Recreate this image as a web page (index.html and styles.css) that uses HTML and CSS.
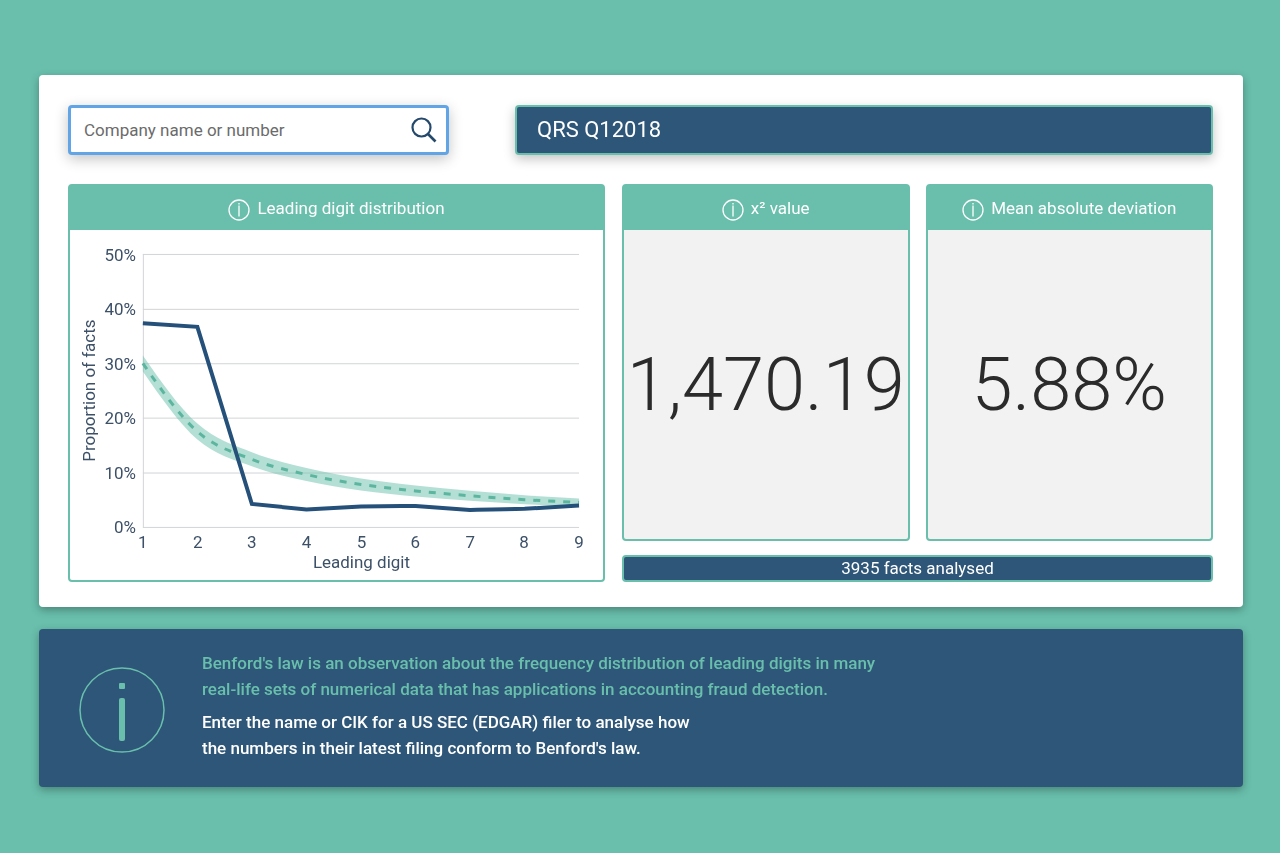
FILE: index.html
```html
<!DOCTYPE html>
<html lang="en">
<head>
<meta charset="utf-8">
<meta name="viewport" content="width=device-width, initial-scale=1">
<title>Benford's law analyser</title>
<link rel="stylesheet" href="styles.css">
</head>
<body>
<svg class="defs" width="0" height="0" aria-hidden="true">
  <symbol id="info" viewBox="0 0 22 22">
    <circle cx="11" cy="11" r="10" fill="none" stroke="currentColor" stroke-width="1.3"/>
    <path d="M11 4v1.6M11 6.6v11" fill="none" stroke="currentColor" stroke-width="1.3"/>
  </symbol>
</svg>
<main class="page">
  <section class="card">
    <div class="top">
      <form class="search" role="search">
        <input class="search-input" type="text" placeholder="Company name or number" aria-label="Company name or number" autofocus>
        <button class="search-button" type="submit" aria-label="Search">
          <svg width="26" height="26" viewBox="0 0 26 26" fill="none" stroke="currentColor" stroke-width="2.2"><circle cx="10.5" cy="10.5" r="9"/><path d="M17 17l7.5 7.5" stroke-width="2.6"/></svg>
        </button>
      </form>
      <h1 class="filing">QRS Q12018</h1>
    </div>
    <div class="results">
      <article class="panel chart-panel">
        <h2 class="panel-title"><svg class="info"><use href="#info"/></svg>Leading digit distribution</h2>
        <svg class="chart" viewBox="70 230 534 351" role="img" aria-label="Leading digit distribution">
          <path class="grid" d="M143 254.500H580M143 309.500H580M143 364H580M143 418.500H580M143 473.500H580M143 528H580M143.500 254V528"/>
          <path class="band" d="M143 355.700C161.200 381.800 179.400 407.900 197.600 423.900C215.800 440.200 234 445.300 252.200 452.800C270.400 460.200 288.700 464.100 306.900 468.500C325 472.900 343.300 476 361.500 478.900C379.700 481.800 398 483.800 416.200 485.900C434.400 488 452.600 489.600 470.800 491.300C489 493 507.200 494.400 525.400 495.700C543.600 497 561.800 497.900 580 498.900V506.900C561.800 506.300 543.600 505.600 525.400 504.700C507.200 503.800 489 502.600 470.800 501.300C452.600 500 434.400 498.600 416.200 496.900C398 495.200 379.700 493.400 361.500 490.900C343.300 488.400 325 485.500 306.900 481.500C288.700 477.500 270.400 473.800 252.200 466.800C234 459.900 215.800 455.600 197.600 439.900C179.400 423.900 161.200 397.800 143 371.700Z"/>
          <path class="expected" d="M143 363.700C161.200 389.800 179.400 415.900 197.600 431.900C215.800 447.900 234 452.600 252.200 459.800C270.400 467 288.700 470.800 306.900 475C325 479.200 343.300 482.200 361.500 484.900C379.700 487.600 398 489.500 416.200 491.400C434.400 493.300 452.600 494.800 470.800 496.300C489 497.800 507.200 499.100 525.400 500.200C543.600 501.300 561.800 502.100 580 502.900"/>
          <path class="actual" d="M143 323.500L197.600 327L252.200 504.500L306.900 510L361.500 507C380 506.500 400 506.300 416.200 506.500L470.800 510.500C490 510.200 507 510 525.400 509.300L580 506"/>
          <g class="label end">
            <text x="136" y="261">50%</text><text x="136" y="315">40%</text><text x="136" y="370">30%</text><text x="136" y="424">20%</text><text x="136" y="479">10%</text><text x="136" y="534">0%</text>
          </g>
          <g class="label">
            <text x="143" y="549">1</text><text x="198" y="549">2</text><text x="252" y="549">3</text><text x="307" y="549">4</text><text x="362" y="549">5</text><text x="416" y="549">6</text><text x="471" y="549">7</text><text x="525" y="549">8</text><text x="580" y="549">9</text>
            <text x="362" y="569">Leading digit</text>
            <text transform="translate(95 391) rotate(-90)">Proportion of facts</text>
          </g>
        </svg>
      </article>
      <div class="stats">
        <article class="panel">
          <h2 class="panel-title"><svg class="info"><use href="#info"/></svg>x² value</h2>
          <p class="value">1,470.19</p>
        </article>
        <article class="panel">
          <h2 class="panel-title"><svg class="info"><use href="#info"/></svg>Mean absolute deviation</h2>
          <p class="value">5.88%</p>
        </article>
        <p class="facts">3935 facts analysed</p>
      </div>
    </div>
  </section>
  <section class="about">
    <svg class="about-icon" viewBox="0 0 86 86"><circle cx="43" cy="43" r="42" fill="none" stroke="currentColor" stroke-width="1.500"/><rect x="40" y="16" width="6" height="6" rx="1" fill="currentColor"/><rect x="40" y="31" width="6" height="43" rx="2" fill="currentColor"/></svg>
    <div class="about-text">
      <p class="lead">Benford's law is an observation about the frequency distribution of leading digits in many<br>real-life sets of numerical data that has applications in accounting fraud detection.</p>
      <p class="hint">Enter the name or CIK for a US SEC (EDGAR) filer to analyse how<br>the numbers in their latest filing conform to Benford's law.</p>
    </div>
  </section>
</main>
</body>
</html>
```
FILE: styles.css
```css
* { box-sizing: border-box; }

body {
  margin: 0;
  background: #69bfac;
  color: #2d5678;
  font-family: Roboto, "Liberation Sans", sans-serif;
  font-size: 17px;
  line-height: 26px;
}

h1, h2, p { margin: 0; font-weight: 400; }

.defs { position: absolute; }

.page {
  display: flex;
  flex-direction: column;
  gap: 22px;
  padding: 75px 37px 66px 39px;
}

.card {
  padding: 30px 30px 25px 29px;
  border-radius: 4px;
  background: #fff;
  box-shadow: 0 3px 8px rgba(0, 0, 0, 0.3);
}

.top {
  display: grid;
  grid-template-columns: 381fr 698fr;
  gap: 66px;
  height: 50px;
  margin-bottom: 29px;
}

.search {
  display: flex;
  align-items: center;
  padding: 0 9px 0 13px;
  border: 3px solid #62a5e6;
  border-radius: 4px;
  background: #fff;
  box-shadow: 0 4px 14px rgba(0, 0, 0, 0.24);
}

.search-input {
  flex: 1;
  min-width: 0;
  padding: 0;
  border: 0;
  outline: 0;
  background: none;
  color: #333;
  font: inherit;
}

.search-input::placeholder { color: #6b6b6b; opacity: 1; }

.search-button {
  display: flex;
  padding: 0;
  border: 0;
  background: none;
  color: #25496b;
}

.filing {
  padding: 0 20px;
  border: 2px solid #69bfac;
  border-radius: 4px;
  background: #2d5678;
  box-shadow: 0 4px 12px rgba(0, 0, 0, 0.24);
  color: #fff;
  font-size: 22px;
  line-height: 46px;
}

.results {
  display: grid;
  grid-template-columns: 537fr 591fr;
  gap: 17px;
}

.panel {
  display: flex;
  flex-direction: column;
  border: 2px solid #69bfac;
  border-radius: 4px;
  background: #f2f2f2;
}

.chart-panel { background: #fff; }

.panel-title {
  display: flex;
  align-items: center;
  justify-content: center;
  gap: 7px;
  height: 44px;
  background: #69bfac;
  color: #fff;
  font-size: 17px;
}

.info { width: 22px; height: 22px; margin-top: 3px; }

.chart { display: block; width: 100%; }

.grid { fill: none; stroke: #d2d4d6; }
.band { fill: #69bfac; fill-opacity: 0.5; }
.expected { fill: none; stroke: #5cb59f; stroke-width: 3; stroke-dasharray: 7 8; }
.actual { fill: none; stroke: #25507a; stroke-width: 4; }
.label { fill: #3c5068; font-size: 17px; text-anchor: middle; }
.end { text-anchor: end; }

.stats {
  display: grid;
  grid-template-columns: 1fr 1fr;
  grid-template-rows: 1fr auto;
  gap: 14px 16px;
}

.value {
  flex: 1;
  display: flex;
  align-items: center;
  justify-content: center;
  color: #2b2b2b;
  font-size: 74px;
  font-weight: 300;
}

.facts {
  grid-column: 1 / -1;
  border: 2px solid #69bfac;
  border-radius: 4px;
  background: #2d5678;
  color: #fff;
  line-height: 23px;
  text-align: center;
}

.about {
  display: flex;
  align-items: center;
  gap: 37px;
  padding: 21px 40px 26px;
  border-radius: 4px;
  background: #2d5678;
  box-shadow: 0 3px 8px rgba(0, 0, 0, 0.3);
  color: #69bfac;
}

.about-icon { width: 86px; height: 86px; margin-top: 8px; }

.about-text { display: flex; flex-direction: column; gap: 7px; }

.lead { font-weight: 500; }

.hint { color: #fff; font-weight: 500; }
```
